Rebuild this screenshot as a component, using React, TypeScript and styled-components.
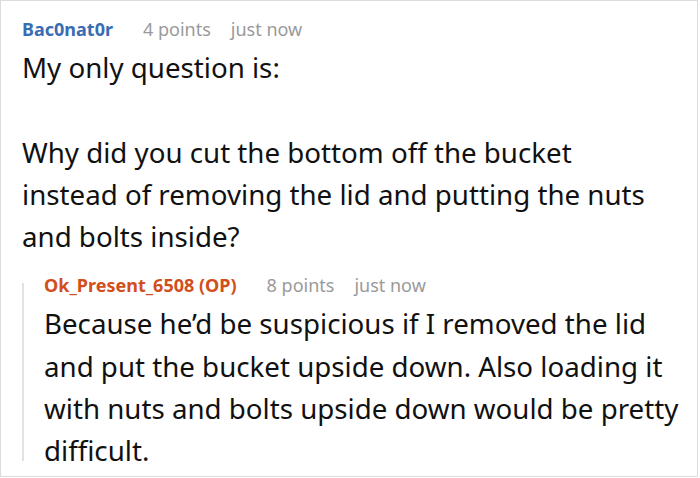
import React from 'react';
import styled, { createGlobalStyle } from 'styled-components';

const GlobalStyle = createGlobalStyle`
  body {
    margin: 0;
    background: #fff;
    font-family: "Noto Sans", "Open Sans", sans-serif;
  }
`;

interface CommentProps {
  author: string,
  points: number,
  time: string,
  op?: boolean,
  body: string,
  bodyWidth?: number,
}

const Comment: React.FC<CommentProps> = ({ author, points, time, op, body, bodyWidth }) => (
  <StyledComment>
    <StyledHeader>
      <StyledAuthor $op={op}>{op ? `${author} (OP)` : author}</StyledAuthor>
      <StyledMeta>{points} points</StyledMeta>
      <StyledMeta>{time}</StyledMeta>
    </StyledHeader>
    <StyledBody $width={bodyWidth}>{body}</StyledBody>
  </StyledComment>
);

const App: React.FC = () => (
  <>
    <GlobalStyle />
    <StyledFrame>
      <Comment
        author="Bac0nat0r"
        points={4}
        time="just now"
        bodyWidth={640}
        body={'My only question is:\n\nWhy did you cut the bottom off the bucket instead of removing the lid and putting the nuts and bolts inside?'}
      />
      <StyledReply>
        <Comment
          author="Ok_Present_6508"
          op
          points={8}
          time="just now"
          body={'Because he\u2019d be suspicious if I removed the lid and put the bucket upside down. Also loading it with nuts and bolts upside down would be pretty difficult.'}
        />
      </StyledReply>
    </StyledFrame>
  </>
);

const StyledFrame = styled.div`
  box-sizing: border-box;
  width: 698px;
  height: 477px;
  border: 1px solid #dcdcdc;
  padding: 12px 12px 0 21px;
  overflow: hidden;
`;

const StyledComment = styled.div`
  display: flex;
  flex-direction: column;
`;

const StyledHeader = styled.div`
  display: flex;
  align-items: baseline;
  gap: 20px;
  font-size: 18px;
  line-height: 33px;
`;

const StyledAuthor = styled.span<{ $op?: boolean }>`
  font-weight: 700;
  color: ${({ $op }) => ($op ? '#d24f1d' : '#3a6cb4')};
  margin-right: 10px;
`;

const StyledMeta = styled.span`
  color: #9a9a9a;
`;

const StyledBody = styled.div<{ $width?: number }>`
  max-width: ${({ $width }) => ($width ? `${$width}px` : 'none')};
  font-size: 27.7px;
  line-height: 42.3px;
  color: #111;
  white-space: pre-line;
`;

const StyledReply = styled.div`
  position: relative;
  margin: 12px 0 0 0;
  padding-left: 22px;

  &::before {
    content: '';
    position: absolute;
    left: 0;
    top: 14px;
    bottom: 11px;
    width: 2px;
    background: #e2e2e2;
  }
`;

export default App;
